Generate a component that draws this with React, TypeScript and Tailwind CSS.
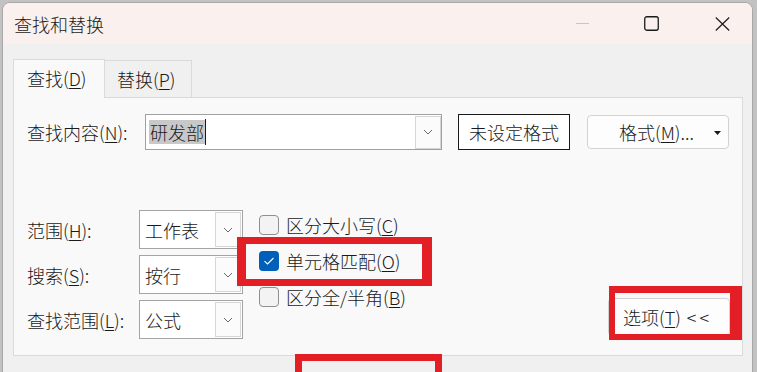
import React from "react";

const font = { fontFamily: '"Noto Sans CJK SC", "Noto Sans", sans-serif' };

function Chevron() {
  return (
    <svg width="10" height="6" viewBox="0 0 10 6">
      <path d="M1 1 L5 5 L9 1" fill="none" stroke="#6a6a6a" strokeWidth="1" />
    </svg>
  );
}

function Select({ text }: { text: string }) {
  return (
    <div className="w-[104px] h-[39px] border border-[#a4a4a4] bg-white flex items-center">
      <span className="pl-[5px] flex-1 text-[18px] leading-none text-[#1a1a1a]">{text}</span>
      <div className="w-[26px] h-[35px] mr-[1px] border border-[#d6d6d6] bg-[#fbfbfb] flex items-center justify-center">
        <Chevron />
      </div>
    </div>
  );
}

function Check({ checked, children }: { checked?: boolean; children: React.ReactNode }) {
  return (
    <div className="flex items-center h-[20px]">
      {checked ? (
        <div className="w-[20px] h-[20px] rounded-[4px] bg-[#005fb8] flex items-center justify-center">
          <svg width="12" height="10" viewBox="0 0 12 10">
            <path d="M1.5 5.2 L4.5 8 L10.5 2" fill="none" stroke="#fff" strokeWidth="1.1" />
          </svg>
        </div>
      ) : (
        <div className="w-[20px] h-[20px] rounded-[4px] border border-[#8f8f8f] bg-[#f3f3f3]" />
      )}
      <span className="ml-[7px] text-[18px] leading-none text-[#1a1a1a]">{children}</span>
    </div>
  );
}

export default function App() {
  return (
    <div className="w-[757px] h-[372px] bg-[#c2c2c2] relative overflow-hidden pt-[2px] pl-[2px] font-light" style={font}>
      <div className="w-[751px] h-[372px] rounded-t-[8px] border border-[#a8a8a8] bg-[#f0f0f0] overflow-hidden flex flex-col">
        {/* title bar */}
        <div className="h-[41px] bg-[#faf0ee] flex items-center pl-[11px] shrink-0">
          <span className="text-[18px] leading-none text-[#1a1a1a]">查找和替换</span>
          <div className="ml-auto flex items-center pr-[22px]">
            <div className="w-[13px] h-[1px] bg-[#c6c6c6] mr-[55px]" />
            <svg width="15" height="15" viewBox="0 0 15 15" className="mr-[56px]">
              <rect x="0.75" y="0.75" width="13.5" height="13.5" rx="2" fill="none" stroke="#1a1a1a" strokeWidth="1.3" />
            </svg>
            <svg width="15" height="14" viewBox="0 0 15 14">
              <path d="M0.8 0.5 L14.2 13.5 M14.2 0.5 L0.8 13.5" fill="none" stroke="#1a1a1a" strokeWidth="1.2" />
            </svg>
          </div>
        </div>

        {/* body */}
        <div className="pl-[10px] pt-[14px] flex flex-col">
          {/* tabs */}
          <div className="flex items-end h-[39px]">
            <div className="w-[92px] h-[39px] bg-[#f9f9f9] border-t border-l border-r border-[#dadada] flex items-center pl-[13px] pb-[2px] relative z-10 -mb-[1px]">
              <span className="text-[18px] leading-none text-[#1a1a1a]">
                查找(<span className="underline underline-offset-2">D</span>)
              </span>
            </div>
            <div className="w-[87px] h-[37px] bg-[#f0f0f0] border-t border-r border-[#dadada] flex items-center pl-[12px]">
              <span className="text-[18px] leading-none text-[#1a1a1a]">
                替换(<span className="underline underline-offset-2">P</span>)
              </span>
            </div>
          </div>

          {/* panel */}
          <div className="w-[730px] h-[259px] bg-[#f9f9f9] border border-[#dadada] pl-[13px] pt-[16px] flex flex-col">
            {/* row 1 */}
            <div className="flex items-center">
              <div className="w-[118px] text-[18px] leading-none text-[#1a1a1a]">
                查找内容(<span className="underline underline-offset-2">N</span>):
              </div>
              <div className="w-[297px] h-[36px] border border-[#a0a0a0] bg-white flex items-center">
                <div className="flex-1 flex items-center pl-[3px]">
                  <span className="bg-[#c8c8c8] text-[18px] leading-[24px] h-[24px] text-[#1a1a1a] px-[1px]">研发部</span>
                  <span className="w-[1px] h-[26px] bg-[#1a1a1a]" />
                </div>
                <div className="w-[26px] h-[33px] mr-[0px] border border-[#d6d6d6] bg-[#fbfbfb] flex items-center justify-center">
                  <Chevron />
                </div>
              </div>
              <div className="ml-[16px] w-[112px] h-[36px] border border-[#1a1a1a] bg-white flex items-center justify-center text-[18px] leading-none text-[#1a1a1a]">
                未设定格式
              </div>
              <div className="ml-[17px] w-[142px] h-[34px] rounded-[4px] border border-[#d2d2d2] bg-[#fdfdfd] flex items-center relative">
                <span className="pl-[31px] text-[18px] leading-none text-[#1a1a1a]">
                  格式(<span className="underline underline-offset-2">M</span>)...
                </span>
                <svg width="7" height="4" viewBox="0 0 7 4" className="absolute right-[7px] top-[15px]">
                  <path d="M0 0 L7 0 L3.5 4 Z" fill="#1a1a1a" />
                </svg>
              </div>
            </div>

            {/* rows 2-4 */}
            <div className="flex mt-[60px]">
              <div className="flex flex-col gap-[6px]">
                <div className="flex items-center">
                  <div className="w-[112px] text-[18px] leading-none text-[#1a1a1a]">
                    范围(<span className="underline underline-offset-2">H</span>):
                  </div>
                  <Select text="工作表" />
                </div>
                <div className="flex items-center">
                  <div className="w-[112px] text-[18px] leading-none text-[#1a1a1a]">
                    搜索(<span className="underline underline-offset-2">S</span>):
                  </div>
                  <Select text="按行" />
                </div>
                <div className="flex items-center">
                  <div className="w-[112px] text-[18px] leading-none text-[#1a1a1a]">
                    查找范围(<span className="underline underline-offset-2">L</span>):
                  </div>
                  <Select text="公式" />
                </div>
              </div>
              <div className="ml-[16px] mt-[5px] flex flex-col gap-[16px]">
                <Check>
                  区分大小写(<span className="underline underline-offset-2">C</span>)
                </Check>
                <Check checked>
                  单元格匹配(<span className="underline underline-offset-2">O</span>)
                </Check>
                <Check>
                  区分全/半角(<span className="underline underline-offset-2">B</span>)
                </Check>
              </div>
              <div className="ml-auto mr-[12px] mt-[88px] w-[122px] h-[38px] rounded-[4px] border border-[#d2d2d2] bg-[#fdfdfd] flex items-center pl-[14px] text-[18px] leading-none text-[#1a1a1a]">
                选项(<span className="underline underline-offset-2">T</span>)<span className="ml-[6px] tracking-[3px]">&lt;&lt;</span>
              </div>
            </div>
          </div>

          {/* bottom buttons */}
          <div className="flex mt-[16px] h-[30px]">
            <div className="ml-[298px] w-[121px] h-[30px] rounded-[4px] border border-[#cfcfcf] bg-[#fdfdfd]" />
            <div className="ml-[19px] w-[137px] h-[30px] rounded-[4px] border border-[#0067c0] bg-[#0067c0]" />
            <div className="ml-[35px] w-[121px] h-[30px] rounded-[4px] border border-[#cfcfcf] bg-[#fdfdfd]" />
          </div>
        </div>
      </div>

      {/* red highlight boxes */}
      <div className="absolute left-[237px] top-[237px] w-[195px] h-[49px] border-[#e31e24] border-t-[7px] border-b-[7px] border-l-[9px] border-r-[10px]" />
      <div className="absolute left-[609px] top-[286px] w-[133px] h-[54px] border-[#e31e24] border-t-[7px] border-b-[6px] border-l-[6px] border-r-[12px]" />
      <div className="absolute left-[295px] top-[354px] w-[147px] h-[30px] border-[#e31e24] border-[7px]" />
    </div>
  );
}
